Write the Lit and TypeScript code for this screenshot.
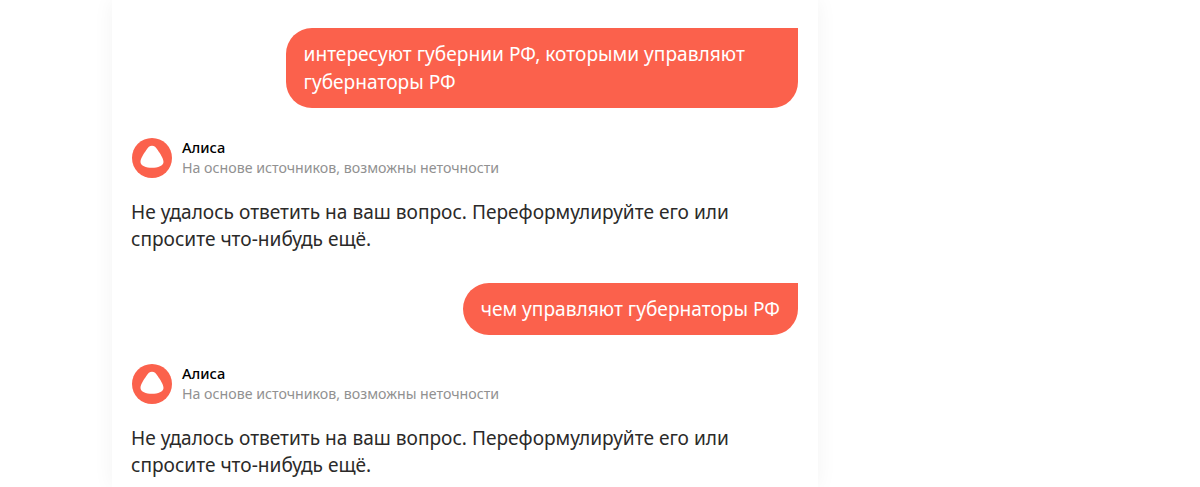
import { LitElement, html, css } from "lit";
import { customElement } from "lit/decorators.js";

const ANSWER = "Не удалось ответить на ваш вопрос. Переформулируйте его или спросите что-нибудь ещё.";

@customElement("app-root")
export class AppRoot extends LitElement {
  static styles = css`
    :host { display: block; height: 487px; overflow: hidden; background: #fff; font-family: "Noto Sans", "Open Sans", sans-serif; }
    .card { width: 706px; height: 487px; margin-left: 112px; box-sizing: border-box; padding: 28px 20px 0; background: #fff;
      box-shadow: 0 0 20px rgba(0,0,0,.05); display: flex; flex-direction: column; overflow: hidden; }
    .user { align-self: flex-end; box-sizing: border-box; max-width: 512px; background: #fb614c; color: #fff; font-size: 19.15px; line-height: 28px;
      padding: 12px 18px 12px 17.5px; border-radius: 26px 0 26px 26px; }
    .head { display: flex; gap: 10px; align-items: center; margin-top: 30px; }
    .user.gap + .head { margin-top: 29px; }
    .logo { width: 40px; height: 40px; flex: none; display: block; }
    .name { font-size: 14.6px; line-height: 18px; margin-bottom: 2px; font-weight: 500; color: #000; }
    .sub { font-size: 14.2px; line-height: 20px; color: #919191; }
    .answer { margin: 21px 0 0 -1px; width: 640px; font-size: 19.1px; line-height: 27px; color: #2b2a29; }
    .gap { margin-top: 30px; }
  `;

  private reply() {
    return html`
      <div class="head">
        <svg class="logo" viewBox="0 0 40 40">
          <circle cx="20" cy="20" r="20" fill="#fb614c"></circle>
          <path fill="#fff" d="M20 7.700c-2.300 0-4 1.600-5.700 4.200C12 15.500 8.500 20 8.500 24c0 3.900 5.500 5.800 11.500 5.800s11.500-1.900 11.500-5.800c0-4-3.500-8.500-5.800-12.100C24 9.300 22.300 7.700 20 7.700z"></path>
        </svg>
        <div>
          <div class="name">Алиса</div>
          <div class="sub">На основе источников, возможны неточности</div>
        </div>
      </div>
      <p class="answer">${ANSWER}</p>`;
  }

  render() {
    return html`<div class="card">
      <div class="user">интересуют губернии РФ, которыми управляют губернаторы РФ</div>
      ${this.reply()}
      <div class="user gap">чем управляют губернаторы РФ</div>
      ${this.reply()}
    </div>`;
  }
}
